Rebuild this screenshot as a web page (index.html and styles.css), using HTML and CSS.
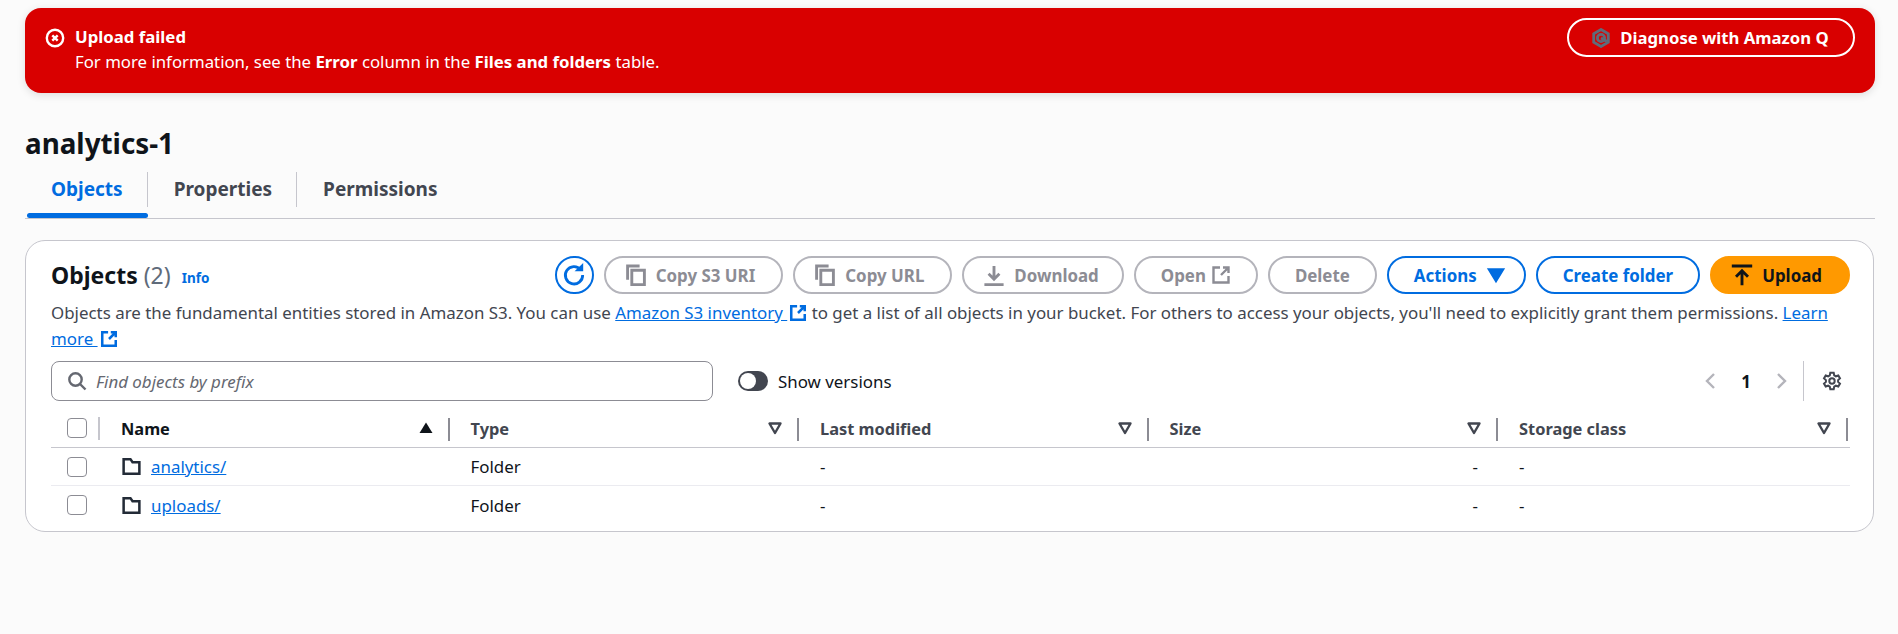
FILE: index.html
```html
<!DOCTYPE html>
<html lang="en">
<head>
  <meta charset="UTF-8" />
  <title>analytics-1 - S3 bucket</title>
  <link rel="stylesheet" href="styles.css">
</head>
<body>

  <div class="flash">
    <svg class="flash-icon" viewBox="0 0 20 20"><circle cx="10" cy="10" r="8.2"/><path d="M7.300 7.300l5.400 5.400M12.700 7.300l-5.400 5.400"/></svg>
    <div class="flash-text">
      <div class="flash-title">Upload failed</div>
      <div>For more information, see the <b>Error</b> column in the <b>Files and folders</b> table.</div>
    </div>
    <button class="btn-q">
      <svg viewBox="0 0 20 20"><path d="M10 1.500l7.300 4.200v8.600L10 18.500l-7.300-4.200V5.700z"/><circle cx="10" cy="10" r="3.600"/><path d="M10 10l6 3.500"/></svg>
      Diagnose with Amazon Q
    </button>
  </div>

  <h1 class="page-title">analytics-1</h1>

  <div class="tabs">
    <div class="tab active">Objects</div>
    <div class="tab">Properties</div>
    <div class="tab">Permissions</div>
  </div>

  <div class="card">
    <div class="card-head">
      <h2>Objects <span class="count">(2)</span></h2>
      <a class="info">Info</a>
      <div class="actions">
        <button class="btn-round">
          <svg viewBox="0 0 24 24"><path d="M18.200 7.200A8 8 0 1 0 20 12"/><path class="solid" d="M12.500 8.500h8V1z"/></svg>
        </button>
        <button class="btn off icon"><svg viewBox="0 0 20 20"><path d="M3 14V2.500h10"/><path d="M6.500 6h10.500v12H6.500z"/></svg>Copy S3 URI</button>
        <button class="btn off icon"><svg viewBox="0 0 20 20"><path d="M3 14V2.500h10"/><path d="M6.500 6h10.500v12H6.500z"/></svg>Copy URL</button>
        <button class="btn off icon download"><svg viewBox="0 0 20 20"><path d="M10 2.500v10.500M5.500 9l4.500 4.500L14.500 9M2 18h16"/></svg>Download</button>
        <button class="btn off">Open<svg class="after" viewBox="0 0 20 20"><path d="M9 2.500H2.500v15h15V11M12 2.500h5.500V8M17 3l-7 7"/></svg></button>
        <button class="btn off">Delete</button>
        <button class="btn menu">Actions<svg class="after caret" viewBox="0 0 20 20"><path d="M3 4.500h14L10 16z"/></svg></button>
        <button class="btn">Create folder</button>
        <button class="btn primary icon"><svg viewBox="0 0 20 20"><path d="M1.500 2.500h17M10 18.500V6.500M5 11.500l5-5 5 5"/></svg>Upload</button>
      </div>
    </div>

    <p class="desc">Objects are the fundamental entities stored in Amazon S3. You can use <a>Amazon S3 inventory <svg class="ext" viewBox="0 0 20 20"><path d="M9 2.500H2.500v15h15V11M12 2.500h5.500V8M17 3l-7 7"/></svg></a> to get a list of all objects in your bucket. For others to access your objects, you'll need to explicitly grant them permissions. <a>Learn</a> <a>more <svg class="ext" viewBox="0 0 20 20"><path d="M9 2.500H2.500v15h15V11M12 2.500h5.500V8M17 3l-7 7"/></svg></a></p>

    <div class="filters">
      <div class="search">
        <svg viewBox="0 0 20 20"><circle cx="8.500" cy="8.500" r="6.200"/><path d="M13 13l5.500 5.500"/></svg>
        <span>Find objects by prefix</span>
      </div>
      <div class="toggle"><i></i></div>
      <span class="toggle-label">Show versions</span>
      <div class="pager">
        <svg class="chev" viewBox="0 0 20 20"><path d="M13 3l-7 7 7 7"/></svg>
        <b>1</b>
        <svg class="chev" viewBox="0 0 20 20"><path d="M7 3l7 7-7 7"/></svg>
      </div>
      <div class="settings">
        <svg viewBox="0 0 20 20"><path d="M8.300 1.800h3.400l.5 2.500 1.700 1 2.400-.8 1.700 2.900-1.900 1.700v1.800l1.900 1.700-1.700 2.900-2.400-.8-1.700 1-.5 2.500H8.300l-.5-2.500-1.700-1-2.400.8-1.700-2.900 1.900-1.700V9.100L2 7.400l1.700-2.900 2.400.8 1.700-1z"/><circle cx="10" cy="10" r="2.700"/></svg>
      </div>
    </div>

    <div class="table">
      <div class="row head">
        <div class="cell-check"><span class="check"></span></div>
        <div class="th name">Name<svg class="sort" viewBox="0 0 16 16"><path d="M1.500 13h13L8 2.500z"/></svg></div>
        <div class="th">Type<svg class="filter" viewBox="0 0 16 16"><path d="M2.500 3.500h11L8 13z"/></svg></div>
        <div class="th">Last modified<svg class="filter" viewBox="0 0 16 16"><path d="M2.500 3.500h11L8 13z"/></svg></div>
        <div class="th">Size<svg class="filter" viewBox="0 0 16 16"><path d="M2.500 3.500h11L8 13z"/></svg></div>
        <div class="th">Storage class<svg class="filter" viewBox="0 0 16 16"><path d="M2.500 3.500h11L8 13z"/></svg></div>
      </div>
      <div class="row body">
        <div class="cell-check"><span class="check"></span></div>
        <div class="td"><svg class="folder" viewBox="0 0 20 20"><path d="M2.500 3h6.500l2 3h6.500v11h-15z"/></svg><a>analytics/</a></div>
        <div class="td">Folder</div>
        <div class="td">-</div>
        <div class="td right">-</div>
        <div class="td">-</div>
      </div>
      <div class="row body last">
        <div class="cell-check"><span class="check"></span></div>
        <div class="td"><svg class="folder" viewBox="0 0 20 20"><path d="M2.500 3h6.500l2 3h6.500v11h-15z"/></svg><a>uploads/</a></div>
        <div class="td">Folder</div>
        <div class="td">-</div>
        <div class="td right">-</div>
        <div class="td">-</div>
      </div>
    </div>
  </div>

</body>
</html>
```

FILE: styles.css
```css
* {
  box-sizing: border-box;
}

body {
  margin: 0;
  padding: 8px 23px 0 25px;
  height: 634px;
  overflow: hidden;
  background: #fbfbfb;
  color: #0f141a;
  font-family: 'Noto Sans', sans-serif;
  font-size: 16.9px;
}

svg {
  fill: none;
  stroke: currentColor;
  stroke-width: 2.4;
  flex: none;
}

a {
  color: #006ce0;
  text-decoration: underline;
}

/* error banner */
.flash {
  display: flex;
  height: 85px;
  width: 1850px;
  padding: 10px 20px 0 20px;
  background: #d90000;
  color: #fff;
  border-radius: 16px;
  box-shadow: 0 2px 8px rgba(0, 0, 0, 0.12);
}

.flash-icon {
  width: 20px;
  height: 20px;
  margin: 10px 10px 0 0;
}

.flash-text {
  flex: 1;
  padding-top: 6px;
  line-height: 25px;
  font-size: 16.8px;
}

.flash-title {
  font-weight: 700;
}

.btn-q {
  display: flex;
  align-items: center;
  justify-content: center;
  gap: 9px;
  width: 288px;
  height: 39px;
  padding-right: 8px;
  background: none;
  border: 2px solid #fff;
  border-radius: 20px;
  color: #fff;
  font: 700 16.7px 'Noto Sans', sans-serif;
}

.btn-q svg {
  width: 20px;
  height: 20px;
  color: #5f6b7a;
  stroke-width: 2.8;
}

.page-title {
  margin: 30px 0 0;
  font-size: 27.8px;
  line-height: 40px;
  font-weight: 700;
}

/* tabs */
.tabs {
  display: flex;
  height: 47px;
  margin-top: 9px;
  border-bottom: 1px solid #c6c6cd;
  font-size: 19px;
  font-weight: 700;
  color: #424650;
}

.tab {
  position: relative;
  height: 35px;
  padding: 0 24px 0 26px;
  line-height: 35px;
  border-right: 1px solid #c6c6cd;
}

.tab:last-child {
  border-right: 0;
}

.tab.active {
  color: #006ce0;
}

.tab.active::after {
  content: "";
  position: absolute;
  left: 2px;
  right: -1px;
  top: 41px;
  height: 5px;
  background: #006ce0;
  border-radius: 3px;
}

/* objects card */
.card {
  width: 1849px;
  height: 292px;
  margin-top: 21px;
  padding: 15px 23px 0 25px;
  background: #fff;
  border: 1px solid #c6c6cd;
  border-radius: 20px;
}

.card-head {
  display: flex;
  align-items: center;
  height: 38px;
}

.card-head h2 {
  margin: 0;
  font-size: 23px;
  font-weight: 700;
}

.count {
  font-weight: 400;
  color: #5f6b7a;
}

.info {
  margin: 6px 0 0 11px;
  font-size: 13.5px;
  font-weight: 700;
  text-decoration: none;
}

.actions {
  display: flex;
  gap: 10px;
  margin-left: auto;
}

.btn,
.btn-round {
  display: flex;
  align-items: center;
  justify-content: center;
  height: 38px;
  background: #fff;
  border: 2px solid #006ce0;
  border-radius: 20px;
  padding: 0 25px;
  color: #006ce0;
  font: 700 16.9px 'Noto Sans', sans-serif;
}

.btn svg {
  width: 24px;
  height: 24px;
  margin-right: 8px;
}

.btn.icon {
  padding: 0 26px 0 18px;
}

.btn.download {
  padding-right: 23px;
}

.btn svg.after {
  width: 20px;
  height: 20px;
  margin: 0 0 0 5px;
}

.btn.menu {
  padding-right: 18px;
}

.btn svg.caret {
  margin-left: 9px;
  fill: currentColor;
}

.btn.off {
  border-color: #b4b4bb;
  color: #8c8c94;
}

.btn-round {
  width: 39px;
  padding: 0;
}

.btn-round svg {
  width: 26px;
  height: 26px;
  stroke-width: 2.6;
}

.btn-round .solid {
  fill: currentColor;
  stroke: none;
}

.btn.primary {
  background: #ff9900;
  border-color: #ff9900;
  color: #0f141a;
}

.desc {
  margin: 6px 0 0;
  line-height: 26px;
  color: #424650;
}

.ext {
  width: 18px;
  height: 18px;
  margin-left: 2px;
  vertical-align: -3px;
  stroke-width: 2.8;
}

/* search row */
.filters {
  display: flex;
  align-items: center;
  height: 40px;
  margin-top: 9px;
}

.search {
  display: flex;
  align-items: center;
  gap: 9px;
  width: 662px;
  height: 40px;
  padding-left: 15px;
  border: 1px solid #8c8c94;
  border-radius: 8px;
  color: #656871;
  font-style: italic;
}

.search svg {
  width: 20px;
  height: 20px;
  color: #656871;
}

.toggle {
  width: 30px;
  height: 20px;
  margin-left: 25px;
  padding: 2px;
  background: #424650;
  border-radius: 10px;
}

.toggle i {
  display: block;
  width: 16px;
  height: 16px;
  background: #fff;
  border-radius: 50%;
}

.toggle-label {
  margin-left: 10px;
}

.pager {
  display: flex;
  align-items: center;
  gap: 20px;
  margin-left: auto;
}

.chev {
  width: 20px;
  height: 20px;
  color: #b4b4bb;
}

.settings {
  display: flex;
  align-items: center;
  height: 40px;
  margin-left: 12px;
  padding: 0 8px 0 18px;
  border-left: 1px solid #c6c6cd;
}

.settings svg {
  width: 20px;
  height: 20px;
  color: #424650;
  stroke-width: 2;
}

/* table */
.table {
  margin-top: 8px;
}

.row {
  display: grid;
  grid-template-columns: 49px repeat(5, 349.5px);
  align-items: center;
}

.row.head {
  height: 39px;
  border-bottom: 1px solid #c6c6cd;
  font-size: 16.4px;
  font-weight: 700;
  color: #424650;
}

.row.body {
  height: 38px;
  border-bottom: 1px solid #ebebf0;
}

.row.body.last {
  border-bottom: 0;
}

.cell-check {
  padding-left: 16px;
}

.check {
  display: block;
  width: 20px;
  height: 20px;
  background: #fff;
  border: 1px solid #8c8c94;
  border-radius: 4px;
}

.th {
  display: flex;
  align-items: center;
  justify-content: space-between;
  height: 30px;
  padding: 0 16px 0 21px;
  position: relative;
}

.th::after {
  content: "";
  position: absolute;
  right: 0;
  top: 5px;
  height: 23px;
  width: 2px;
  background: #8c8c94;
}

.head .cell-check {
  display: flex;
  align-items: center;
  height: 23px;
  border-right: 2px solid #c6c6cd;
}

.th.name {
  color: #0f141a;
}

.sort {
  width: 16px;
  height: 16px;
  fill: currentColor;
  stroke: none;
}

.filter {
  width: 16px;
  height: 16px;
  stroke-width: 2.4;
  stroke-linejoin: round;
}

.td {
  display: flex;
  align-items: center;
  padding-left: 21px;
}

.td.right {
  justify-content: flex-end;
  padding-right: 20px;
}

.folder {
  width: 21px;
  height: 21px;
  margin-right: 9px;
  color: #232b37;
}
```
